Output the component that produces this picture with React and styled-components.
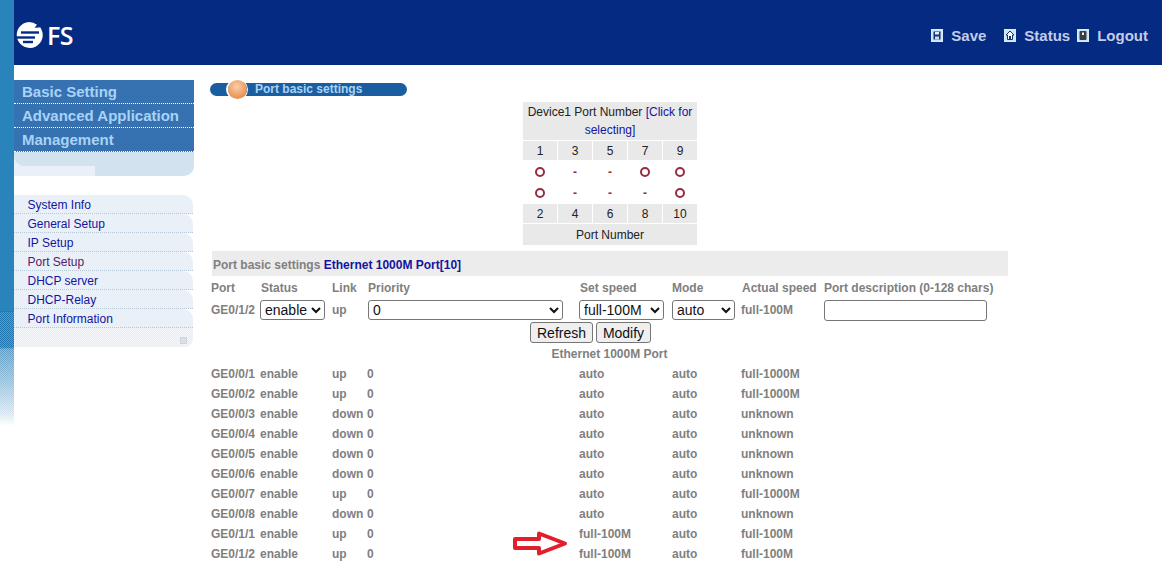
import React from "react";
import styled, { createGlobalStyle } from "styled-components";

const Global = createGlobalStyle`
  html, body { margin: 0; padding: 0; background: #fff; overflow: hidden; }
  body { font-family: "Liberation Sans", Arial, sans-serif; font-size: 12px; }
`;

const Page = styled.div`display: flex; width: 1162px; height: 584px; overflow: hidden;`;
const Stripe = styled.div`
  flex: 0 0 14px; height: 426px; position: relative;
  background: linear-gradient(#2a84bc 0, #2a84bc 73%, #1f76ae 73.2%, #1f76ae 81.5%, #5f9dc6 82%, #9cc2db 90%, #d8e6f0 97%, #fff 100%);
  &::after {
    content: ""; position: absolute; left: 0; right: 0; top: 312px; bottom: 0;
    background: repeating-conic-gradient(rgba(255,255,255,.28) 0 25%, transparent 0 50%) 0 0 / 2px 2px;
  }
`;
const Main = styled.div`flex: 1; display: flex; flex-direction: column; min-width: 0;`;

const Header = styled.header`
  height: 65px; flex: none; background: #052a82; display: flex; align-items: center;
  justify-content: space-between; padding: 0 14px 0 1px; box-sizing: border-box;
`;
const Logo = styled.div`display: flex; align-items: center; gap: 3px; margin-top: 5px;`;
const LogoText = styled.span`
  color: #fff; font: 600 25px/1 "Open Sans", sans-serif; letter-spacing: -0.5px;
`;
const TopNav = styled.nav`display: flex; align-items: center; margin-top: 5px;`;
const TopLink = styled.a`
  display: flex; align-items: center; gap: 8px; margin-left: ${p => p.$gap}px;
  color: #c3cde9; font: 700 15px/1 "Liberation Sans", sans-serif;
`;

const Body = styled.div`flex: 1; display: flex; min-height: 0;`;
const Sidebar = styled.aside`flex: 0 0 180px; padding-top: 15px; margin-right: 16px;`;
const Menu = styled.div`background: #3672b2; display: flex; flex-direction: column;`;
const MenuItem = styled.div`
  height: 24px; box-sizing: border-box; padding: 2px 0 0 8px; color: #a9d3f5;
  font: 700 15px/19px "Liberation Sans", sans-serif; white-space: nowrap;
  border-bottom: 1px dotted #fff;
`;
const MenuFoot = styled.div`
  height: 24px; background: #d3e2ef; border-radius: 0 0 10px 0; overflow: hidden; position: relative;
  &::before {
    content: ""; position: absolute; left: 0; top: 0; width: 100%; height: 14px; background: #d3e2ef;
    border-radius: 0 0 0 10px; z-index: 1;
  }
  &::after {
    content: ""; position: absolute; left: 0; top: 0; bottom: 0; width: 81px; background: #e9f0f8;
    border-radius: 0 14px 0 0;
  }
`;
const SubMenu = styled.div`margin-top: 19px; width: 179px;`;
const SubItem = styled.a`
  display: block; height: 19px; box-sizing: border-box; padding-left: 13.5px;
  background: #e9f0f8; border-radius: 0 10px 0 0; border-bottom: 1px dotted #b9c8d6;
  color: ${p => p.$visited ? "#551a6e" : "#1414a0"}; font: 12px/20px "Liberation Sans", sans-serif;
`;
const SubFoot = styled.div`
  height: 19px; border-radius: 0 0 8px 0; position: relative;
  background: repeating-conic-gradient(#e4ebf2 0 25%, #f6f8fb 0 50%) 0 0 / 2px 2px;
`;
const Corner = styled.span`
  position: absolute; right: 6px; top: 9px; width: 7px; height: 7px; background: #d9e0e6; border: 1px solid #ccd5dc; box-sizing: border-box;
`;

const Content = styled.main`width: 798px; padding-top: 18px; color: #808080;`;
const TitlePill = styled.div`
  width: 197px; height: 13px; background: #1a5ea1; border-radius: 7px; position: relative;
  color: #a9d3f5; font: 700 12px/13px "Liberation Sans", sans-serif; padding-left: 45px; box-sizing: border-box;
`;
const Ball = styled.span`
  position: absolute; left: 18px; top: -3px; width: 19px; height: 19px; border-radius: 50%;
  background: radial-gradient(circle at 45% 35%, #f8d0ac 0, #ee9f63 55%, #d77a3a 100%);
  box-shadow: -2px 0 0 0 #fff, 0 0 0 1px #fff;
`;
const DeviceGrid = styled.div`
  display: grid; width: 174px; margin: 6px 0 0 313px; gap: 1px;
  grid-template-columns: repeat(5, 34px);
  grid-template-rows: 38px 19px 21px 20px 19px 21px;
  text-align: center; color: #222; font: 12px/18px "Liberation Sans", sans-serif;
`;
const Wide = styled.div`grid-column: 1 / -1; background: #e9e9e9; display: flex; align-items: center; justify-content: center;`;
const Num = styled.div`background: #e9e9e9; display: flex; align-items: center; justify-content: center;`;
const Mark = styled.div`
  display: flex; align-items: center; justify-content: center; color: #962c42; font-weight: 700;
`;
const Ring = styled.span`
  width: 10px; height: 10px; box-sizing: border-box; border: 2px solid #962c42; border-radius: 50%; display: block;
`;
const BlueLink = styled.a`color: #1414a0;`;
const SectionBar = styled.div`
  margin: 6px 0 0 2px; height: 25px; background: #ececec; padding-left: 1px;
  font: 700 12px/28px "Liberation Sans", sans-serif; color: #808080;
`;
const Blue = styled.span`color: #1414a0;`;
const Row = styled.div`
  display: grid; grid-template-columns: 49px 72px 35px 212px 93px 69px 83px 184px;
  align-items: center; height: ${p => p.$h || 20}px; padding-left: 1px; margin-top: ${p => p.$mt || 0}px;
  font: 700 12px/1 "Liberation Sans", sans-serif; color: #808080; white-space: nowrap;
`;
const Head = styled.span`padding-left: ${p => p.$pad || 0}px;`;
const Select = styled.select`
  width: ${p => p.$w}px; height: 20px; box-sizing: border-box; font: 14px "Liberation Sans", sans-serif; color: #111;
  background: #fff; border: 1px solid #767676; border-radius: 3px; padding: 0; margin-left: ${p => p.$ml || 0}px;
`;
const TextInput = styled.input`
  width: 163px; height: 21px; box-sizing: border-box; border: 1px solid #767676; border-radius: 3px; background: #fff;
`;
const Actions = styled.div`display: flex; justify-content: center; gap: 3px; margin-top: 1px; padding-right: 37px;`;
const Button = styled.button`
  height: 21px; width: ${p => p.$w}px; box-sizing: border-box; padding: 0; font: 14px "Liberation Sans", sans-serif; color: #111;
  background: #efefef; border: 1px solid #767676; border-radius: 3px;
`;
const Caption = styled.div`text-align: center; font: 700 12px/20px "Liberation Sans", sans-serif; color: #808080; padding-left: 1px; margin-top: 1px;`;
const List = styled.div`position: relative;`;
const Arrow = styled.svg`position: absolute; left: 302px; top: 166px;`;

const LogoMark = () => (
  <svg width="29" height="28" viewBox="0 0 29 28">
    <path d="M14 1a13 13 0 0 1 8 2.8l-2.5 3 5-.3.5-.5A13 13 0 1 1 14 1z" fill="#fff" />
    <path d="M6 11.5h18" stroke="#052a82" strokeWidth="2.4" />
    <path d="M0 16.5h20" stroke="#052a82" strokeWidth="2.4" />
    <path d="M8 21h10" stroke="#052a82" strokeWidth="2.4" />
  </svg>
);

const IconFrame = ({ children }) => (
  <svg width="12" height="13" viewBox="0 0 12 13">
    <rect x=".5" y=".5" width="11" height="12" fill="#c9e6f7" stroke="#d8ecf8" />
    {children}
  </svg>
);
const SaveIcon = () => (
  <IconFrame><rect x="2.5" y="2.5" width="7" height="8" fill="#10307a" /><rect x="4" y="3" width="4" height="2.5" fill="#e5eef8" /><rect x="4" y="7.5" width="4" height="3" fill="#cfdcef" /></IconFrame>
);
const HomeIcon = () => (
  <IconFrame><path d="M6 2 2 6h1.5v4.5h5V6H10z" fill="#fff" stroke="#10307a" /><rect x="5" y="7" width="2" height="3" fill="#10307a" /></IconFrame>
);
const DoorIcon = () => (
  <IconFrame><rect x="2.5" y="2" width="7" height="9" rx="1" fill="#3b3b48" /><rect x="5" y="3.5" width="2" height="2.5" fill="#f0f0f0" /></IconFrame>
);

const topCols = [[1, 3, 5, 7, 9], [2, 4, 6, 8, 10]];
const marksA = [1, 0, 0, 1, 1];
const marksB = [1, 0, 0, 0, 1];
const submenu = ["System Info", "General Setup", "IP Setup", "Port Setup", "DHCP server", "DHCP-Relay", "Port Information"];
const ports = [
  ["GE0/0/1", "up", "auto", "full-1000M"],
  ["GE0/0/2", "up", "auto", "full-1000M"],
  ["GE0/0/3", "down", "auto", "unknown"],
  ["GE0/0/4", "down", "auto", "unknown"],
  ["GE0/0/5", "down", "auto", "unknown"],
  ["GE0/0/6", "down", "auto", "unknown"],
  ["GE0/0/7", "up", "auto", "full-1000M"],
  ["GE0/0/8", "down", "auto", "unknown"],
  ["GE0/1/1", "up", "full-100M", "full-100M"],
  ["GE0/1/2", "up", "full-100M", "full-100M"],
];

export default function App() {
  return (
    <Page>
      <Global />
      <Stripe />
      <Main>
        <Header>
          <Logo><LogoMark /><LogoText>FS</LogoText></Logo>
          <TopNav>
            <TopLink><SaveIcon />Save</TopLink>
            <TopLink $gap={18}><HomeIcon />Status</TopLink>
            <TopLink $gap={7}><DoorIcon />Logout</TopLink>
          </TopNav>
        </Header>
        <Body>
          <Sidebar>
            <Menu>
              <MenuItem>Basic Setting</MenuItem>
              <MenuItem>Advanced Application</MenuItem>
              <MenuItem>Management</MenuItem>
            </Menu>
            <MenuFoot />
            <SubMenu>
              {submenu.map(s => <SubItem key={s} $visited={s === "Port Setup"}>{s}</SubItem>)}
              <SubFoot><Corner /></SubFoot>
            </SubMenu>
          </Sidebar>
          <Content>
            <TitlePill><Ball />Port basic settings</TitlePill>
            <DeviceGrid>
              <Wide>
                <span>Device1 Port Number <BlueLink>[Click for selecting]</BlueLink></span>
              </Wide>
              {topCols[0].map(n => <Num key={n}>{n}</Num>)}
              {marksA.map((m, i) => <Mark key={i}>{m ? <Ring /> : "-"}</Mark>)}
              {marksB.map((m, i) => <Mark key={i}>{m ? <Ring /> : "-"}</Mark>)}
              {topCols[1].map(n => <Num key={n}>{n}</Num>)}
              <Wide>Port Number</Wide>
            </DeviceGrid>
            <SectionBar>Port basic settings <Blue>Ethernet 1000M Port[10]</Blue></SectionBar>
            <Row $h={22} $mt={1}>
              <Head>Port</Head><Head $pad={1}>Status</Head><Head>Link</Head><Head $pad={1}>Priority</Head>
              <Head $pad={1}>Set speed</Head><Head>Mode</Head><Head $pad={1}>Actual speed</Head><Head>Port description (0-128 chars)</Head>
            </Row>
            <Row $h={22}>
              <span>GE0/1/2</span>
              <Select $w={65}><option>enable</option></Select>
              <span>up</span>
              <Select $w={195} $ml={1}><option>0</option></Select>
              <Select $w={85}><option>full-100M</option></Select>
              <Select $w={63}><option>auto</option></Select>
              <Head>full-100M</Head>
              <TextInput />
            </Row>
            <Actions>
              <Button $w={63}>Refresh</Button>
              <Button $w={55}>Modify</Button>
            </Actions>
            <Caption>Ethernet 1000M Port</Caption>
            <List>
              {ports.map((p, i) => (
                <Row key={i}>
                  <span>{p[0]}</span><span>enable</span><span>{p[1]}</span><Head>0</Head>
                  <span>{p[2]}</span><span>auto</span><Head>{p[3]}</Head><span />
                </Row>
              ))}
              <Arrow width="56" height="27" viewBox="0 0 56 27">
                <path d="M3 9h24V3.5l26 10-26 10V18H3z" fill="#fff" stroke="#e21f2d" strokeWidth="4" strokeLinejoin="round" />
              </Arrow>
            </List>
          </Content>
        </Body>
      </Main>
    </Page>
  );
}
